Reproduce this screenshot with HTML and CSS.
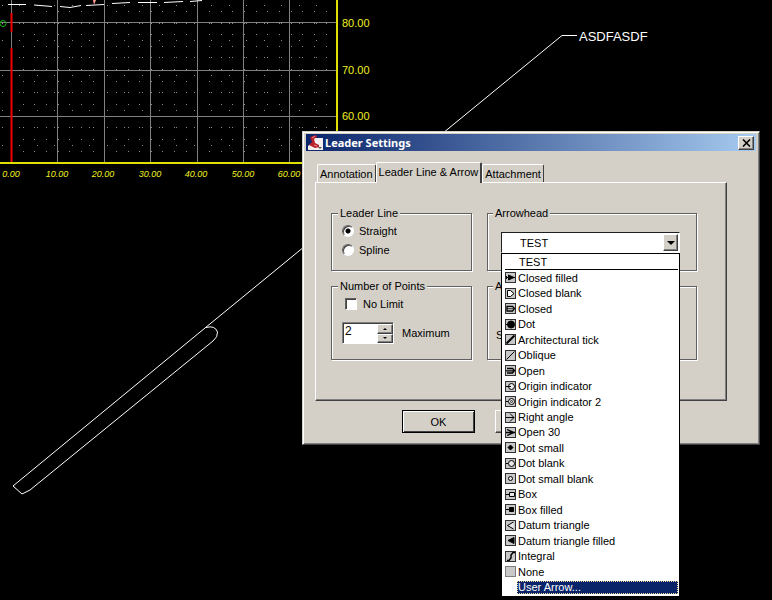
FILE: index.html
```html
<!DOCTYPE html>
<html lang="en">
<head>
  <meta charset="UTF-8">
  <title>Leader Settings</title>
  <link rel="stylesheet" href="styles.css">
</head>
<body>
  <svg class="drawing" width="772" height="600" viewBox="0 0 772 600">
    <!-- grid -->
    <g id="dots" fill="#8c8c8c"></g>
    <path class="grid" d="M0 22.5H336M0 70.5H336M0 116.5H336M57.5 0V162M104.5 0V162M150.5 0V162M197.5 0V162M243.5 0V162M289.5 0V162M11.5 0V162"/>
    <path class="red" d="M11.5 13V32M11.5 48V162"/>
    <path class="frame" d="M336.5 0V163M0 163H337"/>
    <path class="profile" d="M8 4.5H26M34 5L52 6.5M60 6.5L70 7.500L81 5.500M86 5.500L104 4.500M112 3.500L130 2.500M138 2.500H157M164 2.500L183 1.500M190 1.500L202 .5"/>
    <path d="M93 0H96L94 5Z" fill="#ff9c90"/>
    <circle cx="3" cy="23.500" r="3" fill="none" stroke="#18b818"/>

    <g class="scale-y">
      <text x="342" y="27">80.00</text>
      <text x="342" y="74">70.00</text>
      <text x="342" y="120">60.00</text>
    </g>
    <g class="scale-x">
      <text x="11" y="177">0.00</text>
      <text x="57" y="177">10.00</text>
      <text x="103" y="177">20.00</text>
      <text x="150" y="177">30.00</text>
      <text x="196" y="177">40.00</text>
      <text x="243" y="177">50.00</text>
      <text x="289" y="177">60.00</text>
    </g>

    <!-- leader and slot -->
    <path class="leader" d="M577 35.500H562L205 328L13 486L22 494L30 490L213 341Q218 337 217.500 332Q215 325 206 327.500"/>
    <text class="note" x="579" y="41">ASDFASDF</text>
  </svg>

  <div class="dialog" role="dialog" aria-labelledby="title">
    <div class="titlebar">
      <svg class="app-icon" width="15" height="15" viewBox="0 0 15 15">
        <path d="M4 3H15V15H0V11L4 8Z" fill="#f6efef"/>
        <path d="M2 2L8 0L9 2L6 4L7 8L11 10V12L7 13L1 10L4 7Z" fill="#b8202a"/>
        <path d="M4 3L7 1M6 10L9 11" stroke="#f08a8a" fill="none"/>
        <path d="M10 12H14L12 14Z" fill="#555"/>
      </svg>
      <h1 id="title">Leader Settings</h1>
      <button class="close" aria-label="Close">
        <svg width="9" height="8" viewBox="0 0 9 8"><path d="M1 0.500L8 7.500M8 0.500L1 7.500" stroke="#000" stroke-width="1.600"/></svg>
      </button>
    </div>

    <div class="content">
      <div class="tabs" role="tablist">
        <button class="tab" role="tab">Annotation</button>
        <button class="tab active" role="tab" aria-selected="true">Leader Line &amp; Arrow</button>
        <button class="tab" role="tab">Attachment</button>
      </div>

      <div class="panel">
        <fieldset class="line-group">
          <legend>Leader Line</legend>
          <label><input type="radio" name="line" checked>Straight</label>
          <label><input type="radio" name="line">Spline</label>
        </fieldset>

        <fieldset class="arrow-group">
          <legend>Arrowhead</legend>
          <div class="combo">
            <select aria-label="Arrowhead"><option>TEST</option></select>
            <span class="combo-arrow"></span>
            <div class="menu">
              <div class="current">TEST</div>
              <ul role="listbox" aria-label="Arrowheads">
                <li><svg class="icon" viewBox="0 0 11 11"><path class="solid" d="M3.500 3L9 5.500L3.500 8Z"/><path d="M0 5.500H11M1.500 4V7"/></svg>Closed filled</li>
                <li><svg class="icon" viewBox="0 0 11 11"><path class="white" d="M2.500 2.500H5.500L9 5.500L5.500 8.500H2.500Z"/></svg>Closed blank</li>
                <li><svg class="icon" viewBox="0 0 11 11"><path class="white" d="M2 3.500H7.500L9.500 5.500L7.500 8H2Z" stroke-width="1.300"/><path d="M2 5.800H9"/></svg>Closed</li>
                <li><svg class="icon" viewBox="0 0 11 11"><circle class="solid" cx="6" cy="5.500" r="3.500"/><path d="M0 5.500H3"/></svg>Dot</li>
                <li><svg class="icon" viewBox="0 0 11 11"><path d="M1.500 9.500L9.500 1.500" stroke-width="2"/></svg>Architectural tick</li>
                <li><svg class="icon" viewBox="0 0 11 11"><path d="M1.500 9.500L9.500 1.500"/></svg>Oblique</li>
                <li><svg class="icon" viewBox="0 0 11 11"><path d="M2 3.500H7.500L9.500 5.500L7.500 8H2M1 5.800H9" stroke-width="1.300"/></svg>Open</li>
                <li><svg class="icon" viewBox="0 0 11 11"><circle class="light" cx="6.500" cy="5.500" r="3"/><path d="M0 5.500H6"/></svg>Origin indicator</li>
                <li><svg class="icon" viewBox="0 0 11 11"><circle class="light" cx="6.500" cy="5.500" r="3"/><circle cx="6.500" cy="5.500" r="1" stroke-width=".8"/><path d="M0 5.500H3"/></svg>Origin indicator 2</li>
                <li><svg class="icon" viewBox="0 0 11 11"><path d="M1 5.500H9M5 1.500L9 5.500L5 9.500"/></svg>Right angle</li>
                <li><svg class="icon" viewBox="0 0 11 11"><path d="M1 5.500H10M2 2.500L9 5.500L2 8.500" stroke-width="1.300"/></svg>Open 30</li>
                <li><svg class="icon" viewBox="0 0 11 11"><path class="solid" d="M5.500 3L8 5.500L5.500 8L3 5.500Z"/></svg>Dot small</li>
                <li><svg class="icon" viewBox="0 0 11 11"><circle class="light" cx="6.500" cy="5.500" r="3"/><path d="M0 5.500H3"/></svg>Dot blank</li>
                <li><svg class="icon" viewBox="0 0 11 11"><circle class="light" cx="5.500" cy="5.500" r="2"/></svg>Dot small blank</li>
                <li><svg class="icon" viewBox="0 0 11 11"><path class="light" d="M4.500 3.500H9.500V7.500H4.500Z"/><path d="M1 5.500H4"/></svg>Box</li>
                <li><svg class="icon" viewBox="0 0 11 11"><path class="solid" d="M4.500 3.500H8.500V7.500H4.500Z"/><path d="M1 5.500H4"/></svg>Box filled</li>
                <li><svg class="icon" viewBox="0 0 11 11"><path class="light" d="M8.500 2L2.500 5.500L8.500 9"/></svg>Datum triangle</li>
                <li><svg class="icon" viewBox="0 0 11 11"><path class="solid" d="M9 2.500L3 5.500L9 8.500Z"/></svg>Datum triangle filled</li>
                <li><svg class="icon" viewBox="0 0 11 11"><path d="M2 9.500H4L6 7V4L8 1.500H10" stroke-width="1.500"/></svg>Integral</li>
                <li><svg class="icon empty" viewBox="0 0 11 11"></svg>None</li>
                <li class="selected" aria-selected="true"><span>User Arrow...</span></li>
              </ul>
            </div>
          </div>
        </fieldset>

        <fieldset class="points-group">
          <legend>Number of Points</legend>
          <label><input type="checkbox">No Limit</label>
          <div class="spin-row">
            <div class="spinner">
              <input type="text" id="maximum" value="2">
              <div class="spin-buttons">
                <button class="up" aria-label="More"></button>
                <button class="down" aria-label="Fewer"></button>
              </div>
            </div>
            <label for="maximum">Maximum</label>
          </div>
        </fieldset>

        <fieldset class="angle-group">
          <legend>A</legend>
          <p>S</p>
        </fieldset>
      </div>

      <div class="buttons">
        <button class="btn default">OK</button>
        <button class="btn" aria-label="Cancel"></button>
      </div>
    </div>
  </div>

  <script>
    // two overlapping snap grids, one finer than the other
    const dots = document.getElementById('dots');

    function addDots(step) {
      for (let y = 22.5 - step; y < 156; y += step) {
        if (y < 2) continue;
        for (let x = 2 + (step < 15 ? 9 - step : 0); x < 330; x += step) {
          const dot = document.createElementNS('http://www.w3.org/2000/svg', 'rect');
          dot.setAttribute('x', Math.round(x));
          dot.setAttribute('y', Math.round(y));
          dot.setAttribute('width', 1);
          dot.setAttribute('height', 1);
          dots.appendChild(dot);
        }
      }
    }

    addDots(11.65);
    addDots(17.45);
  </script>
</body>
</html>
```
FILE: styles.css
```css
* {
  box-sizing: border-box;
}

body {
  margin: 0;
  min-height: 100vh;
  background: #000;
  color: #000;
  font: 11px/14px "Liberation Sans", Arial, sans-serif;
  overflow: hidden;
}

button, input, select {
  font: inherit;
  color: inherit;
  margin: 0;
  padding: 0;
  border: 0;
  border-radius: 0;
}

/* drawing */
.drawing {
  display: block;
}

.grid, .red, .frame, .profile, .leader {
  fill: none;
  stroke-width: 1;
}

.grid {
  stroke: #808080;
}

.red {
  stroke: #f00000;
  stroke-width: 2;
}

.frame {
  stroke: #e0e000;
  stroke-width: 2;
  shape-rendering: crispEdges;
}

.profile, .leader {
  stroke: #fff;
}

.scale-y, .scale-x {
  fill: #f0f020;
  font-size: 11px;
}

.scale-x {
  font-size: 9px;
  font-style: italic;
  text-anchor: middle;
}

.note {
  fill: #fff;
  font-size: 13px;
}

/* dialog */
.dialog {
  position: absolute;
  left: 302px;
  top: 131px;
  width: 458px;
  padding: 2px 3px 3px;
  background: #d4d0c8;
  border: 1px solid;
  border-color: #d4d0c8 #404040 #404040 #d4d0c8;
  box-shadow: inset 1px 1px 0 #fff, inset -1px -1px 0 #808080;
}

.titlebar {
  display: flex;
  align-items: center;
  gap: 2px;
  height: 17px;
  padding: 0 2px;
  background: linear-gradient(to right, #0a246a, #a6caf0);
  color: #fff;
}

.titlebar h1 {
  flex: 1;
  margin: 0;
  font: bold 11px/16px "Noto Sans", sans-serif;
}

.close {
  display: flex;
  align-items: center;
  justify-content: center;
  width: 16px;
  height: 14px;
}

.close, .combo-arrow, .spin-buttons button, .btn {
  background: #d4d0c8;
  border: 1px solid;
  border-color: #fff #404040 #404040 #fff;
  box-shadow: inset -1px -1px 0 #808080;
}

.content {
  padding: 11px 29px 8px 9px;
}

.tabs {
  display: flex;
  align-items: flex-end;
  padding-left: 2px;
}

.tab {
  height: 18px;
  padding: 0 2px;
  background: #d4d0c8;
  border: 1px solid;
  border-color: #fff #404040 transparent #fff;
  border-bottom: 0;
  border-radius: 2px 2px 0 0;
  white-space: nowrap;
}

.tab.active {
  position: relative;
  height: 21px;
  margin-bottom: -1px;
  padding-bottom: 3px;
  border-right-width: 2px;
}

.panel {
  display: grid;
  grid-template-columns: 141px 1fr;
  gap: 9px 15px;
  padding: 24px 29px 40px 15px;
  border: 1px solid;
  border-color: #fff #404040 #404040 #fff;
  box-shadow: inset -1px -1px 0 #808080;
}

fieldset {
  min-width: 0;
  margin: 0;
  padding: 0 13px;
  border: 1px solid #606060;
  box-shadow: 1px 1px 0 #fff, inset 1px 1px 0 #fff;
}

legend {
  margin-left: -8px;
  padding: 0 2px;
  line-height: 12px;
  background: #d4d0c8;
  white-space: nowrap;
}

.line-group {
  height: 64px;
  padding-left: 10px;
}

.points-group {
  height: 80px;
  padding-left: 10px;
}

.line-group legend, .points-group legend {
  margin-left: -4px;
}

fieldset > label {
  display: flex;
  align-items: center;
  gap: 5px;
  margin-top: 5px;
}

input[type="radio"], input[type="checkbox"] {
  appearance: none;
  width: 12px;
  height: 12px;
  background: #fff;
  border: 1px solid;
  border-color: #606060 #fff #fff #606060;
  box-shadow: inset 1px 1px 0 #404040;
}

input[type="radio"] {
  border-radius: 50%;
}

input[type="radio"]:checked {
  background: radial-gradient(circle, #000 2px, #fff 3px);
}

.points-group > label {
  gap: 6px;
  padding-left: 3px;
}

.spin-row {
  display: flex;
  align-items: center;
  gap: 8px;
  margin-top: 11px;
}

.spinner {
  display: flex;
  width: 52px;
  height: 22px;
  background: #fff;
  border: 1px solid;
  border-color: #808080 #fff #fff #808080;
  box-shadow: inset 1px 1px 0 #404040;
}

.spinner input {
  flex: 1;
  min-width: 0;
  height: 16px;
  padding-left: 2px;
  background: none;
  font-size: 12px;
}

.spin-buttons {
  display: flex;
  flex-direction: column;
  width: 16px;
  padding-top: 1px;
}

.spin-buttons button {
  display: flex;
  align-items: center;
  justify-content: center;
  flex: 1;
}

.spin-buttons button::before {
  content: "";
  border: 2px solid transparent;
  border-top: 0;
  border-bottom-color: #000;
}

.spin-buttons .down::before {
  transform: rotate(180deg);
}

.combo {
  position: relative;
  width: 179px;
  margin-top: 13px;
}

.combo select {
  display: block;
  appearance: none;
  width: 100%;
  height: 21px;
  padding-left: 18px;
  background: #fff;
  border: 1px solid;
  border-color: #202020 #fff #fff #202020;
}

.combo-arrow {
  position: absolute;
  top: 2px;
  right: 2px;
  display: flex;
  align-items: center;
  justify-content: center;
  width: 15px;
  height: 17px;
  pointer-events: none;
}

.combo-arrow::before {
  content: "";
  border: 4px solid transparent;
  border-top-color: #000;
  border-bottom: 0;
}

.menu {
  position: absolute;
  z-index: 1;
  top: 100%;
  left: 0;
  width: 179px;
  padding: 1px 1px 1px 3px;
  background: #fff;
  border: 1px solid #000;
}

.current {
  padding-left: 14px;
  border-bottom: 1px solid #000;
}

/* rows share the list height evenly */
.menu ul {
  display: grid;
  grid-auto-rows: 1fr;
  height: 325px;
  margin: 0;
  padding: 0;
  list-style: none;
}

.menu li {
  display: flex;
  align-items: center;
  gap: 2px;
  white-space: nowrap;
}

.icon {
  width: 11px;
  height: 11px;
  background: #c8c8c8;
  outline: 1px solid #303030;
  outline-offset: -1px;
  fill: none;
  stroke: #000;
}

.icon.empty {
  outline-color: #808080;
}

.icon .solid {
  fill: #000;
}

.icon .white {
  fill: #fff;
}

.icon .light {
  fill: #e8e8e8;
}

.menu .selected span {
  flex: 1;
  margin-left: 12px;
  padding-left: 1px;
  line-height: 13px;
  background: #0a246a;
  color: #fff;
  outline: 1px dotted #f5db95;
  outline-offset: -1px;
}

.angle-group {
  padding: 0 8px;
}

.angle-group legend {
  margin-left: -3px;
}

.angle-group p {
  margin: 36px 0 0;
}

.buttons {
  display: flex;
  gap: 20px;
  margin-top: 9px;
  padding-left: 87px;
}

.btn {
  width: 73px;
  height: 23px;
}

.btn.default {
  border-color: #000;
  box-shadow: inset 1px 1px 0 #fff, inset -1px -1px 0 #404040;
}
```
